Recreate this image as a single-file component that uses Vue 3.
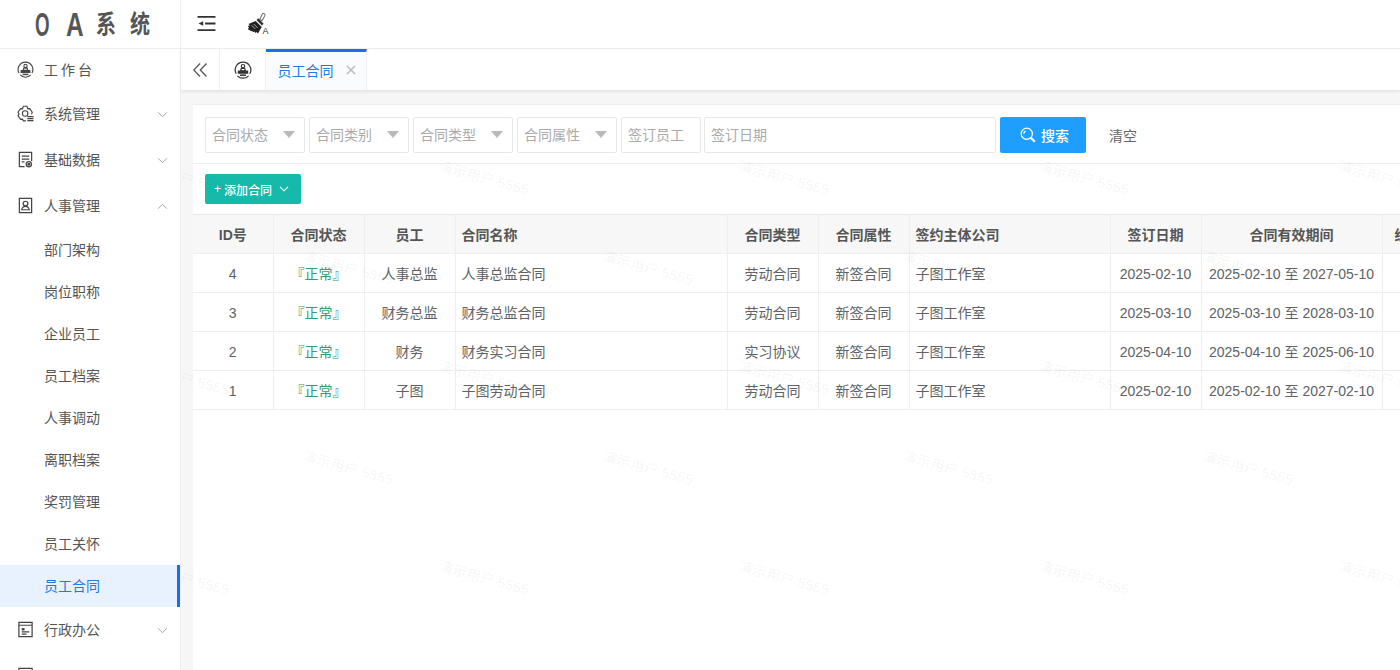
<script setup>
const filters = ['合同状态', '合同类别', '合同类型', '合同属性']

const subMenu = ['部门架构', '岗位职称', '企业员工', '员工档案', '人事调动', '离职档案', '奖罚管理', '员工关怀', '员工合同']

const rows = [
  { id: 4, staff: '人事总监', name: '人事总监合同', type: '劳动合同', date: '2025-02-10', end: '2027-05-10' },
  { id: 3, staff: '财务总监', name: '财务总监合同', type: '劳动合同', date: '2025-03-10', end: '2028-03-10' },
  { id: 2, staff: '财务', name: '财务实习合同', type: '实习协议', date: '2025-04-10', end: '2025-06-10' },
  { id: 1, staff: '子图', name: '子图劳动合同', type: '劳动合同', date: '2025-02-10', end: '2027-02-10' },
]

// two staggered rows of watermark, offsets are relative to the main area
const marks = []
for (let x = 0; x < 5; x++) {
  for (let y = 0; y < 3; y++) {
    marks.push({ left: x * 300 - 43, top: y * 200 + 76 })
    if (y > 0) marks.push({ left: x * 300 + 121, top: y * 200 - 34 })
  }
}
</script>

<template>
  <div class="app">
    <aside class="sidebar">
      <div class="logo">
        <span class="logo-o">O</span>
        <span class="logo-a">A</span>
        <span class="logo-cn">系</span>
        <span class="logo-cn">统</span>
      </div>
      <nav class="menu">
        <div class="menu-item">
          <svg class="menu-icon" viewBox="0 0 18 18" fill="none" stroke="currentColor" stroke-width="1.200">
            <path d="M2.200 12.800A7.800 7.800 0 1 1 15.800 12.800" />
            <path d="M3.400 14.800a7.800 7.800 0 0 0 11.200 0" />
            <circle cx="9" cy="5.200" r="1.700" />
            <path d="M7.200 7.500h3.600l.6 2.300H6.600z" />
            <path d="M4.400 10.200h9.200v2H4.400z" fill="currentColor" />
            <path d="M6 14.200h6" stroke-width="1.500" />
          </svg>
          <span class="spaced">工作台</span>
        </div>
        <div class="menu-item">
          <svg class="menu-icon" viewBox="0 0 18 18" fill="none" stroke="currentColor" stroke-width="1.200">
            <path d="M9.500 16.800H6.800l-1-1.800-2 .2L1 11.300l1.200-1.800L1 7.700l2.800-3.900 2 .2 1-2.700h3.700l1 2.700 2-.2 2.700 3.900-.9 2.100" />
            <circle cx="8.600" cy="9" r="2.900" />
            <path d="M11 12.300h6.500M11 14.400h6.500M11 16.500h6.500" />
          </svg>
          <span>系统管理</span>
          <svg class="chevron" viewBox="0 0 12 8" fill="none" stroke="currentColor" stroke-width="1.100"><path d="M1 1.500l5 5 5-5" /></svg>
        </div>
        <div class="menu-item">
          <svg class="menu-icon" viewBox="0 0 18 18" fill="none" stroke="currentColor" stroke-width="1.300">
            <path d="M8 16.500H2.500V1.500h13v9" />
            <path d="M5 5.500h8M5 8.500h8M5 11.500h3" />
            <circle cx="12.500" cy="14" r="2.800" />
            <circle cx="12.500" cy="14" r="1" fill="currentColor" />
          </svg>
          <span>基础数据</span>
          <svg class="chevron" viewBox="0 0 12 8" fill="none" stroke="currentColor" stroke-width="1.100"><path d="M1 1.500l5 5 5-5" /></svg>
        </div>
        <div class="menu-item">
          <svg class="menu-icon" viewBox="0 0 18 18" fill="none" stroke="currentColor" stroke-width="1.300">
            <path d="M2.500 1.500h13v15h-13z" />
            <circle cx="9" cy="7" r="2.500" />
            <path d="M5 13.500c.5-2.500 2-3.500 4-3.500s3.500 1 4 3.500z" />
          </svg>
          <span>人事管理</span>
          <svg class="chevron" viewBox="0 0 12 8" fill="none" stroke="currentColor" stroke-width="1.100"><path d="M1 6.500l5-5 5 5" /></svg>
        </div>
        <div
          v-for="item in subMenu"
          :key="item"
          class="sub-item"
          :class="{ active: item === '员工合同' }"
        >
          {{ item }}
        </div>
        <div class="menu-item">
          <svg class="menu-icon" viewBox="0 0 18 18" fill="none" stroke="currentColor" stroke-width="1.300">
            <path d="M2 1.500h14v15H2zM2 4.500h14" />
            <path d="M5 7.500h3v2.500H5z" fill="currentColor" stroke="none" />
            <path d="M5 11.500h8M5 14h5" />
          </svg>
          <span>行政办公</span>
          <svg class="chevron" viewBox="0 0 12 8" fill="none" stroke="currentColor" stroke-width="1.100"><path d="M1 1.500l5 5 5-5" /></svg>
        </div>
        <div class="menu-item">
          <svg class="menu-icon" viewBox="0 0 18 18" fill="none" stroke="currentColor" stroke-width="1.300">
            <path d="M2 1.500h14v15H2zM2 4.500h14" />
          </svg>
        </div>
      </nav>
    </aside>

    <div class="content">
      <header class="topbar">
        <svg class="fold" viewBox="0 0 19 18" fill="none" stroke="#333" stroke-width="2">
          <path d="M0 2h19M8 9h11M0 16h19" />
          <path d="M6 6.500v5L1 9z" fill="#333" stroke="none" />
        </svg>
        <svg class="brush" viewBox="0 0 24 24">
          <path d="M15.200 2.200a1.500 1.500 0 0 1 2.600 1.500L15 8.800 12.800 7.300z" fill="#fff" stroke="#777" stroke-width="1.100" />
          <path d="M11.300 6.300l5.400 5.400-1.800 1.800-5.400-5.400z" fill="#333" />
          <path d="M8.700 9l6 6-3.700 6.500-1.500-1.600-.9 1-1.400-1.500-.9.900-1.300-1.500-.9.700-1.300-1.600-.8.300-1.200-1.500 1.300-.8L.800 14l2.100-.5-1.400-1.600z" fill="#222" />
          <path d="M6.800 12l3.800 3.900M4.600 13.200l3.600 3.700" stroke="#fff" stroke-width=".6" />
          <text x="15.500" y="22" font-size="9" fill="#333" font-family="Liberation Sans, sans-serif">A</text>
        </svg>
      </header>

      <div class="tabs">
        <div class="tab tab-collapse">
          <svg viewBox="0 0 14 14" fill="none" stroke="#555" stroke-width="1.300"><path d="M7 .500L.8 7l6.200 6.500M13.500 .500L7.300 7l6.200 6.500" /></svg>
        </div>
        <div class="tab tab-home">
          <svg viewBox="0 0 18 18" fill="none" stroke="#333" stroke-width="1.200">
            <path d="M2.200 12.800A7.800 7.800 0 1 1 15.800 12.800" />
            <path d="M3.400 14.800a7.800 7.800 0 0 0 11.200 0" />
            <circle cx="9" cy="5.200" r="1.700" />
            <path d="M7.200 7.500h3.600l.6 2.300H6.600z" />
            <path d="M4.400 10.200h9.200v2H4.400z" fill="#333" />
            <path d="M6 14.200h6" stroke-width="1.500" />
          </svg>
        </div>
        <div class="tab tab-active">
          <span>员工合同</span>
          <svg class="tab-close" viewBox="0 0 10 10" fill="none" stroke="#bbb" stroke-width="1.500"><path d="M1 1l8 8M9 1l-8 8" /></svg>
        </div>
      </div>

      <main class="main">
        <section class="card">
          <div class="search-bar">
            <div v-for="f in filters" :key="f" class="field field-select">
              <span>{{ f }}</span>
              <i class="caret"></i>
            </div>
            <div class="field field-staff">签订员工</div>
            <div class="field field-date">签订日期</div>
            <button class="btn-search">
              <svg viewBox="0 0 16 16" fill="none" stroke="#fff" stroke-width="1.300">
                <circle cx="6.800" cy="6.800" r="5.600" />
                <path d="M3.800 6.800a3 3 0 0 1 2-2.800" />
                <path d="M10.800 10.800l4 4" stroke-width="2.200" />
              </svg>
              <span>搜索</span>
            </button>
            <span class="btn-clear">清空</span>
          </div>

          <div class="toolbar">
            <button class="btn-add">
              <span class="plus">+</span>添加合同
              <svg viewBox="0 0 10 6" fill="none" stroke="#fff" stroke-width="1.100"><path d="M1 .8l4 4 4-4" /></svg>
            </button>
          </div>

          <table class="table">
            <colgroup>
              <col style="width: 80px" />
              <col style="width: 91px" />
              <col style="width: 91px" />
              <col style="width: 272px" />
              <col style="width: 91px" />
              <col style="width: 91px" />
              <col style="width: 201px" />
              <col style="width: 91px" />
              <col style="width: 181px" />
              <col style="width: 91px" />
            </colgroup>
            <thead>
              <tr>
                <th>ID号</th>
                <th>合同状态</th>
                <th>员工</th>
                <th class="left">合同名称</th>
                <th>合同类型</th>
                <th>合同属性</th>
                <th class="left">签约主体公司</th>
                <th>签订日期</th>
                <th>合同有效期间</th>
                <th class="clipped">经办人</th>
              </tr>
            </thead>
            <tbody>
              <tr v-for="r in rows" :key="r.id">
                <td>{{ r.id }}</td>
                <td class="status">『正常』</td>
                <td>{{ r.staff }}</td>
                <td class="left">{{ r.name }}</td>
                <td>{{ r.type }}</td>
                <td>新签合同</td>
                <td class="left">子图工作室</td>
                <td>{{ r.date }}</td>
                <td>{{ r.date }} 至 {{ r.end }}</td>
                <td></td>
              </tr>
            </tbody>
          </table>
        </section>

        <div class="watermarks">
          <span
            v-for="(m, i) in marks"
            :key="i"
            class="mark"
            :style="{ left: m.left + 'px', top: m.top + 'px' }"
          >演示用户 5555</span>
        </div>
      </main>
    </div>
  </div>
</template>

<style>
html,
body {
  margin: 0;
  overflow: hidden;
  background: #fff;
}
</style>

<style scoped>
.app {
  display: flex;
  width: 1400px;
  height: 670px;
  overflow: hidden;
  font-family: "Liberation Sans", "Noto Sans CJK SC", sans-serif;
  font-size: 14px;
  color: #606266;
}

.sidebar {
  flex: none;
  width: 180px;
  border-right: 1px solid #eee;
  background: #fff;
}

.logo {
  display: flex;
  align-items: center;
  height: 48px;
  padding-left: 35px;
  color: #555;
  border-bottom: 1px solid #eee;
  white-space: nowrap;
}

.logo span {
  display: inline-block;
  transform-origin: left center;
}

.logo-o,
.logo-a {
  font-size: 34px;
  font-weight: 700;
  line-height: 48px;
}

.logo-o {
  width: 31px;
  transform: scaleX(0.55);
}

.logo-a {
  width: 30px;
  transform: scaleX(0.72);
}

.logo-cn {
  width: 34px;
  font-size: 25px;
  font-weight: 700;
  line-height: 48px;
  transform: scaleX(0.8);
}

.menu-item {
  display: flex;
  align-items: center;
  box-sizing: border-box;
  height: 46px;
  padding: 0 0 2px 17px;
  color: #555;
  position: relative;
}

.menu-item:first-child {
  height: 42px;
}

.menu-icon {
  width: 17px;
  height: 17px;
  margin-right: 10px;
  color: #444;
}

.spaced {
  letter-spacing: 3px;
}

.chevron {
  position: absolute;
  right: 12px;
  top: 50%;
  width: 11px;
  height: 7px;
  margin-top: -3px;
  color: #9aa3b0;
}

.sub-item {
  height: 42px;
  line-height: 42px;
  padding-left: 44px;
  color: #555;
}

.sub-item.active {
  color: #1f7ae0;
  background: #e8f2fe;
  border-right: 3px solid #1a6fe8;
}

.content {
  flex: 1;
  min-width: 0;
  display: flex;
  flex-direction: column;
}

.topbar {
  flex: none;
  display: flex;
  align-items: center;
  height: 48px;
  padding-left: 16px;
  gap: 31px;
  border-bottom: 1px solid #eee;
  background: #fff;
}

.fold {
  width: 19px;
  height: 17px;
  margin-bottom: 1px;
}

.brush {
  width: 24px;
  height: 24px;
}

.tabs {
  flex: none;
  display: flex;
  height: 41px;
  background: #fff;
  border-bottom: 1px solid #e8e8e8;
  box-shadow: 0 1px 3px rgba(0, 0, 0, 0.08);
  position: relative;
  z-index: 2;
}

.tab {
  display: flex;
  align-items: center;
  justify-content: center;
  border-right: 1px solid #eee;
  box-sizing: border-box;
}

.tab-collapse {
  width: 39px;
}

.tab-collapse svg {
  width: 14px;
  height: 14px;
}

.tab-home {
  width: 46px;
}

.tab-home svg {
  width: 18px;
  height: 18px;
}

.tab-active {
  width: 101px;
  color: #1f7ae0;
  border-top: 3px solid #1a6fe8;
  background: #fafbfc;
  font-size: 14px;
  gap: 12px;
  padding: 0 0 3px 1px;
}

.tab-close {
  width: 10px;
  height: 10px;
  margin-top: 1px;
}

.main {
  flex: 1;
  position: relative;
  overflow: hidden;
  background: #f6f6f6;
  padding: 13px 0 0 12px;
}

.card {
  background: #fff;
  height: 100%;
  overflow: hidden;
  border-top: 1px solid #eee;
}

.search-bar {
  display: flex;
  align-items: center;
  box-sizing: border-box;
  height: 59px;
  padding: 1px 0 0 12px;
  gap: 4px;
  border-bottom: 1px solid #eee;
}

.field {
  box-sizing: border-box;
  height: 36px;
  line-height: 34px;
  border: 1px solid #e8e8e8;
  border-radius: 2px;
  padding-left: 6px;
  color: #aaa;
  background: #fff;
}

.field-select {
  display: flex;
  align-items: center;
  width: 100px;
}

.field-staff {
  width: 80px;
}

.field-date {
  width: 292px;
  margin-left: -1px;
}

.caret {
  width: 0;
  height: 0;
  margin-left: 15px;
  border-left: 6px solid transparent;
  border-right: 6px solid transparent;
  border-top: 7px solid #b8b8b8;
}

.btn-search {
  display: flex;
  align-items: center;
  justify-content: center;
  gap: 5px;
  width: 86px;
  height: 36px;
  padding: 0 0 0 3px;
  border: 0;
  border-radius: 2px;
  background: #1e9fff;
  color: #fff;
  font: inherit;
  font-weight: 500;
}

.btn-search svg {
  width: 16px;
  height: 16px;
}

.btn-clear {
  margin-left: 19px;
  color: #666;
}

.toolbar {
  display: flex;
  align-items: center;
  height: 50px;
  padding-left: 12px;
  border-bottom: 1px solid #e8e8e8;
}

.btn-add {
  display: flex;
  align-items: center;
  width: 96px;
  height: 30px;
  padding: 0 0 0 9px;
  border: 0;
  border-radius: 2px;
  background: #16baaa;
  color: #fff;
  font: inherit;
  font-size: 12px;
  font-weight: 500;
  white-space: nowrap;
}

.btn-add svg {
  width: 10px;
  height: 6px;
  margin-left: 7px;
}

.plus {
  font-size: 12px;
  margin-right: 3px;
}

.table {
  border-collapse: collapse;
  table-layout: fixed;
  width: 1280px;
}

.table th,
.table td {
  height: 37px;
  padding: 1px 6px 0;
  border-right: 1px solid #eee;
  border-bottom: 1px solid #eee;
  line-height: 20px;
  text-align: center;
  white-space: nowrap;
  overflow: hidden;
  box-sizing: content-box;
}

.table th {
  background: #f7f7f7;
  color: #555;
  font-weight: 700;
}

.table .left {
  text-align: left;
}

.status {
  color: #2f9e6e;
}

.table .clipped {
  padding-left: 12px;
  text-align: left;
}

.watermarks {
  position: absolute;
  inset: 0;
  pointer-events: none;
  overflow: hidden;
  z-index: 1;
}

.mark {
  position: absolute;
  font-size: 14px;
  letter-spacing: 0.2px;
  color: rgba(0, 0, 0, 0.055);
  transform: rotate(15deg);
  white-space: nowrap;
}
</style>
